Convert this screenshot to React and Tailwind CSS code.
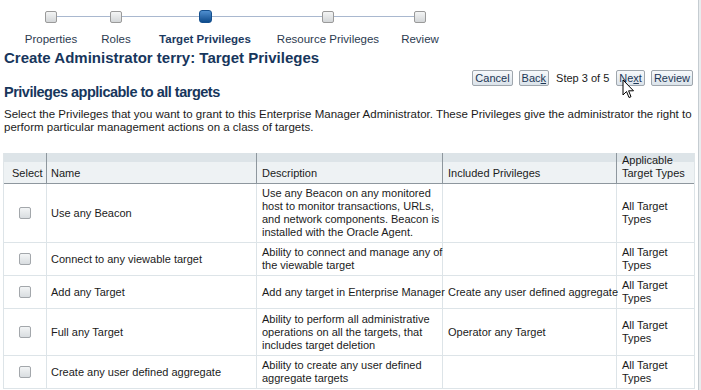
import React from "react";

const rows = [
    {
        name: "Use any Beacon",
        desc: ["Use any Beacon on any monitored", "host to monitor transactions, URLs,", "and network components. Beacon is", "installed with the Oracle Agent."],
        incl: "",
        h: "h-[59px]",
    },
    {
        name: "Connect to any viewable target",
        desc: ["Ability to connect and manage any of", "the viewable target"],
        incl: "",
        h: "h-[33px]",
    },
    {
        name: "Add any Target",
        desc: ["Add any target in Enterprise Manager"],
        incl: "Create any user defined aggregate",
        h: "h-[33px]",
    },
    {
        name: "Full any Target",
        desc: ["Ability to perform all administrative", "operations on all the targets, that", "includes target deletion"],
        incl: "Operator any Target",
        h: "h-[47px]",
    },
    {
        name: "Create any user defined aggregate",
        desc: ["Ability to create any user defined", "aggregate targets"],
        incl: "",
        h: "h-[33px]",
    },
];

function Square({active}){
    if(active){
        return <div className="w-[13px] h-[13px] rounded-[3px] border border-[#15508f] bg-gradient-to-b from-[#4f8fd0] to-[#0d4c8c] shrink-0"></div>
    }
    return <div className="w-[12px] h-[12px] rounded-[2px] border border-[#9a9a9a] bg-gradient-to-b from-[#f4f5f5] to-[#d3d6d8] shrink-0"></div>
}

function Btn({children}){
    return <button className="h-[16px] px-[2px] border border-[#9fa6ad] rounded-[2px] bg-gradient-to-b from-[#f7f9fb] to-[#dbe3ea] text-[11px] leading-[14px] text-[#1c3655]">{children}</button>
}

export default function App(){
    return(
        <div className="relative w-[701px] h-[390px] bg-white overflow-hidden text-[#1b1b1b]" style={{fontFamily:'"Liberation Sans", Arial, sans-serif'}}>
            {/* train */}
            <div className="flex items-center pt-[10px] pl-[45px]">
                <Square/>
                <div className="w-[53px] h-[1px] bg-[#a9b8cf]"></div>
                <Square/>
                <div className="w-[77px] h-[1px] bg-[#a9b8cf]"></div>
                <Square active/>
                <div className="w-[110px] h-[1px] bg-[#a9b8cf]"></div>
                <Square/>
                <div className="w-[80px] h-[1px] bg-[#a9b8cf]"></div>
                <Square/>
            </div>
            <div className="flex mt-[9px] text-[11.5px] leading-[14px] text-[#2b3a4f]">
                <div className="ml-[21px] w-[60px] text-center">Properties</div>
                <div className="ml-[5px] w-[60px] text-center">Roles</div>
                <div className="ml-[4px] w-[110px] text-center font-bold text-[#1c3a60]">Target Privileges</div>
                <div className="ml-[13px] w-[110px] text-center">Resource Privileges</div>
                <div className="ml-[7px] w-[60px] text-center">Review</div>
            </div>
            <h1 className="pl-[4px] mt-[3px] text-[15px] leading-[18px] font-bold text-[#17365c]">Create Administrator terry: Target Privileges</h1>

            <div className="flex justify-end items-center gap-[6px] pr-[8px] mt-[3px] text-[11px]">
                <Btn>Cancel</Btn>
                <Btn>Bac<span className="underline">k</span></Btn>
                <span className="text-[#1b1b1b] px-[1px]">Step 3 of 5</span>
                <Btn>Ne<span className="underline">x</span>t</Btn>
                <Btn>Review</Btn>
            </div>

            <h2 className="pl-[4px] mt-[-4px] text-[14.5px] leading-[18px] tracking-[-0.5px] font-bold text-[#17365c]">Privileges applicable to all targets</h2>
            <p className="pl-[4px] mt-[7px] text-[11.5px] leading-[13px] text-[#1b1b1b]">
                Select the Privileges that you want to grant to this Enterprise Manager Administrator. These Privileges give the administrator the right to<br/>
                perform particular management actions on a class of targets.
            </p>

            <table className="ml-[3px] mt-[19px] w-[691px] border-collapse text-[11px] leading-[13px] table-fixed">
                <colgroup>
                    <col className="w-[43px]"/>
                    <col className="w-[210px]"/>
                    <col className="w-[186px]"/>
                    <col className="w-[174px]"/>
                    <col className="w-[78px]"/>
                </colgroup>
                <thead>
                    <tr className="bg-[linear-gradient(to_bottom,#dde4e8_0px,#dde4e8_9px,#eef2f4_9px)] border-b border-b-[#8e979e]">
                        <th className="h-[31px] align-bottom font-normal text-left pl-[8px] pb-[3px] border-l border-l-[#dfe5e8]">Select</th>
                        <th className="align-bottom font-normal text-left pl-[4px] pb-[3px] border-l border-l-[#8e979e]">Name</th>
                        <th className="align-bottom font-normal text-left pl-[5px] pb-[3px] border-l border-l-[#8e979e]">Description</th>
                        <th className="align-bottom font-normal text-left pl-[5px] pb-[3px] border-l border-l-[#8e979e]">Included Privileges</th>
                        <th className="align-bottom font-normal text-left pl-[5px] pb-[3px] border-l border-l-[#8e979e] border-r border-r-[#dfe5e8]">Applicable<br/>Target Types</th>
                    </tr>
                </thead>
                <tbody>
                    {rows.map((r,i)=>(
                        <tr key={i} className={`${r.h} border-b border-b-[#dde4e8]`}>
                            <td className="border-l border-[#dde4e8] align-middle">
                                <div className="mx-auto w-[12px] h-[12px] rounded-[2px] border border-[#a3a7ab] bg-gradient-to-b from-[#f3f5f6] to-[#d9dde0]"></div>
                            </td>
                            <td className="border-l border-[#dde4e8] pl-[4px] align-middle whitespace-nowrap">{r.name}</td>
                            <td className="border-l border-[#dde4e8] pl-[5px] align-middle whitespace-nowrap">
                                {r.desc.map((d,j)=><div key={j}>{d}</div>)}
                            </td>
                            <td className="border-l border-[#dde4e8] pl-[5px] align-middle whitespace-nowrap">{r.incl}</td>
                            <td className="border-l border-r border-[#dde4e8] pl-[5px] align-middle">All Target<br/>Types</td>
                        </tr>
                    ))}
                </tbody>
            </table>

            <div className="absolute right-0 top-0 w-[3px] h-full bg-[#e8ecee] border-l border-l-[#c5ccd1]"></div>

            {/* mouse pointer */}
            <svg className="absolute left-[622px] top-[79px]" width="13" height="21" viewBox="0 0 13 21">
                <path d="M1 1 L1 16 L4.5 12.5 L7 18.5 L9 17.7 L6.6 11.8 L11.5 11.8 Z" fill="#fff" stroke="#000" strokeWidth="1" strokeLinejoin="round"/>
            </svg>
        </div>
    )
}
